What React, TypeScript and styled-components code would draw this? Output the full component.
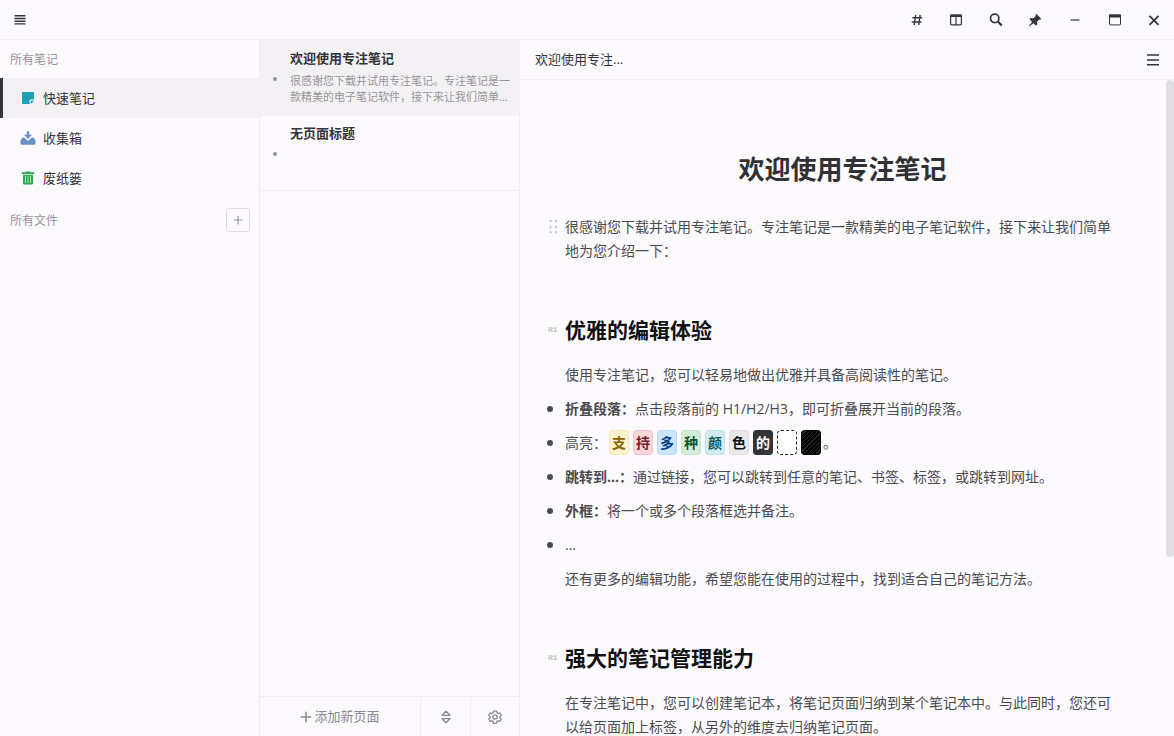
import React from "react";
import styled, { createGlobalStyle, css } from "styled-components";

const GlobalStyle = createGlobalStyle`
  * { box-sizing: border-box; }
  html, body { margin: 0; padding: 0; }
  body {
    background: #fcfafd;
    color: #34343b;
    font-family: "Open Sans", "Noto Sans CJK SC", sans-serif;
    font-size: 13px;
  }
  button { font: inherit; color: inherit; background: none; border: 0; padding: 0; cursor: pointer; }
  a { color: inherit; text-decoration: none; }
  h1, h2, p, ul { margin: 0; padding: 0; }
`;

const line = "#f0eef2";

const Shell = styled.div`
  display: flex;
  flex-direction: column;
  height: 100vh;
  overflow: hidden;
`;

const TopBar = styled.header`
  display: flex;
  justify-content: space-between;
  flex: none;
  height: 40px;
  border-bottom: 1px solid ${line};
`;

const WindowTools = styled.div`
  display: grid;
  grid-template-columns: repeat(7, minmax(0, 1fr));
  justify-items: center;
  width: 277px;
`;

const IconButton = styled.button<{ $width?: number }>`
  display: flex;
  align-items: center;
  justify-content: center;
  width: ${(p) => p.$width ?? 40}px;
  height: 39px;
  svg { display: block; }
`;

const Body = styled.div`
  display: flex;
  flex: 1;
  min-height: 0;
`;

const Sidebar = styled.nav`
  flex: none;
  width: 260px;
  border-right: 1px solid ${line};
`;

const SectionHead = styled.div<{ $tall?: boolean }>`
  display: flex;
  align-items: center;
  justify-content: space-between;
  height: ${(p) => (p.$tall ? 44 : 38)}px;
  padding: 0 9px 0 10px;
  color: #97959b;
  font-size: 12px;
`;

const NavItem = styled.a<{ $active?: boolean }>`
  display: flex;
  align-items: center;
  gap: 7px;
  height: 40px;
  padding-left: 17px;
  border-left: 3px solid ${(p) => (p.$active ? "#34343f" : "transparent")};
  background: ${(p) => (p.$active ? "#f3f1f4" : "transparent")};
  svg { display: block; }
`;

const Label = styled.span`
  padding-bottom: 2px;
`;

const AddFile = styled.button`
  display: flex;
  align-items: center;
  justify-content: center;
  width: 24px;
  height: 24px;
  border: 1px solid #e0dee2;
  border-radius: 3px;
`;

const PageList = styled.section`
  display: flex;
  flex-direction: column;
  flex: none;
  width: 260px;
  border-right: 1px solid ${line};
`;

const Pages = styled.div`
  flex: 1;
`;

const PageItem = styled.a<{ $active?: boolean }>`
  display: grid;
  grid-template-columns: 30px 1fr;
  align-items: start;
  height: 76px;
  padding: 9px 8px 0 0;
  border-bottom: 1px solid ${line};
  background: ${(p) => (p.$active ? "#f3f1f4" : "transparent")};
  & + & { margin-top: -1px; }
`;

const Dot = styled.span`
  width: 4px;
  height: 4px;
  margin: 28px 0 0 13px;
  border-radius: 50%;
  background: #97959b;
`;

const PageTitle = styled.div`
  font-weight: 600;
  line-height: 18px;
`;

const Preview = styled.div`
  padding-top: 6px;
  overflow: hidden;
  color: #97959b;
  font-size: 11px;
  line-height: 16px;
`;

const ListFooter = styled.footer`
  display: grid;
  grid-template-columns: 1fr 50px 49px;
  height: 40px;
  border-top: 1px solid ${line};
  color: #8b898f;
`;

const AddPage = styled.button`
  display: flex;
  align-items: center;
  justify-content: center;
  gap: 2px;
`;

const FooterButton = styled.button`
  display: flex;
  align-items: center;
  justify-content: center;
  border-left: 1px solid ${line};
`;

const Editor = styled.main`
  display: flex;
  flex-direction: column;
  flex: 1;
  min-width: 0;
`;

const EditorHead = styled.div`
  display: flex;
  align-items: center;
  justify-content: space-between;
  flex: none;
  height: 40px;
  padding-left: 15px;
  border-bottom: 1px solid ${line};
`;

const ScrollRow = styled.div`
  display: flex;
  flex: 1;
  min-height: 0;
`;

const Page = styled.article`
  flex: 1;
  min-width: 0;
  overflow-y: auto;
  scrollbar-width: none;
  padding: 69px 46px 40px 25px;
  color: #4b4a4f;
  font-size: 14px;
  line-height: 24px;
`;

const Track = styled.div`
  flex: none;
  width: 8px;
`;

const Thumb = styled.div`
  height: 72.7%;
  border-radius: 4px;
  background: #e1dfe2;
`;

const DocTitle = styled.h1`
  margin-bottom: 26px;
  padding-left: 20px;
  color: #313034;
  font-size: 26px;
  line-height: 40px;
  text-align: center;
`;

const block = css`
  display: grid;
  grid-template-columns: 20px 1fr;
`;

const Block = styled.div`
  ${block}
`;

const HeadBlock = styled.div`
  ${block}
  margin: 51px 0 17px;
`;

const List = styled.ul`
  margin: 10px 0;
  list-style: none;
`;

const Item = styled.li`
  ${block}
  & + & { margin-top: 10px; }
`;

const Bullet = styled.span`
  width: 6px;
  height: 6px;
  margin: 9px 0 0 2px;
  border-radius: 50%;
  background: #4b4a4f;
`;

const Handle = styled.button`
  display: block;
  height: 24px;
  padding-left: 4px;
  svg { display: block; }
`;

const Level = styled.button`
  height: 32px;
  padding-left: 3px;
  color: #c3c1c6;
  font-family: "Liberation Mono", monospace;
  font-size: 8px;
  font-weight: 700;
  line-height: 32px;
  text-align: left;
`;

const Heading = styled.h2`
  color: #111013;
  font-size: 21px;
  line-height: 32px;
`;

const Chip = styled.mark<{ $bg: string; $fg: string; $edge: string; $dashed?: boolean }>`
  margin: 0 2px;
  padding: 2px;
  border: 1px ${(p) => (p.$dashed ? "dashed" : "solid")} ${(p) => p.$edge};
  border-radius: 4px;
  background: ${(p) => p.$bg};
  color: ${(p) => p.$fg};
  font-weight: 600;
`;

const chips = [
  { text: "支", bg: "#fff3cd", fg: "#856404", edge: "#f6e8bc" },
  { text: "持", bg: "#f8d7da", fg: "#721c24", edge: "#f0c6cb" },
  { text: "多", bg: "#cce5ff", fg: "#004085", edge: "#b8daff" },
  { text: "种", bg: "#d4edda", fg: "#155724", edge: "#c3e6cb" },
  { text: "颜", bg: "#d1ecf1", fg: "#0c5460", edge: "#bee5eb" },
  { text: "色", bg: "#eae8ec", fg: "#111013", edge: "#dddbdf" },
  { text: "的", bg: "#343338", fg: "#ffffff", edge: "#343338" },
  { text: "\u3000", bg: "#ffffff", fg: "#111013", edge: "#222126", dashed: true },
  {
    text: "\u3000",
    bg: "repeating-linear-gradient(135deg, #000 0 2px, #2a2a2a 2px 3px)",
    fg: "#ffffff",
    edge: "#000000",
  },
];

const Stroke = ({ size = 16, width = 2, d }: { size?: number; width?: number; d: string }) => (
  <svg width={size} height={size} viewBox="0 0 16 16" fill="none" stroke="currentColor" strokeWidth={width}>
    <path d={d} />
  </svg>
);

const MenuIcon = () => <Stroke width={1.4} d="M2.5 3.8h11M2.5 6.5h11M2.5 9.2h11M2.5 11.9h11" />;

const ColumnsIcon = () => (
  <svg width="16" height="16" viewBox="0 0 16 16" fill="none" stroke="currentColor">
    <rect x="2.6" y="3" width="10.8" height="9.8" rx="0.8" strokeWidth="1.2" />
    <path d="M2.5 3.8h11" strokeWidth="2.4" />
    <path d="M8 4v9" strokeWidth="1.2" />
  </svg>
);

const SearchIcon = () => (
  <svg width="16" height="16" viewBox="0 0 16 16" fill="none" stroke="currentColor">
    <circle cx="6.7" cy="6.4" r="4.2" strokeWidth="1.7" />
    <path d="M9.8 9.5l4 4" strokeWidth="2.2" />
  </svg>
);

const PinIcon = () => (
  <svg width="16" height="16" viewBox="0 0 16 16" fill="currentColor">
    <path d="M9.3 1.8l4.9 4.9-1 1-1-.3-2.2 2.4.2 2.8-1.2 1.2-2.6-2.6-3.8 3-.5-.5 3-3.8-2.6-2.6 1.2-1.2 2.8.2 2.4-2.2-.4-1z" />
  </svg>
);

const MaximizeIcon = () => (
  <svg width="16" height="16" viewBox="0 0 16 16" fill="none" stroke="currentColor">
    <rect x="2.5" y="3" width="11" height="9.9" rx="0.8" strokeWidth="1" />
    <path d="M2 4h12" strokeWidth="3" />
  </svg>
);

const NoteIcon = () => (
  <svg width="16" height="16" viewBox="0 0 16 16">
    <path fill="#1ba2b8" d="M3 2h10a1 1 0 0 1 1 1v6.500h-3.500a1 1 0 0 0-1 1V14H3a1 1 0 0 1-1-1V3a1 1 0 0 1 1-1z" />
    <path fill="#1ba2b8" d="M10.7 10.7H14L10.7 14z" />
  </svg>
);

const InboxIcon = () => (
  <svg width="16" height="16" viewBox="0 0 16 16" fill="#6a92c2">
    <path d="M2.6 7.4h1.6L8 11l3.800-3.600h1.600l2.100 3.100v3a1.300 1.300 0 0 1-1.300 1.300H1.800a1.300 1.300 0 0 1-1.300-1.300v-3z" />
    <path d="M6.700 1.200h2.600v3.600h2.700L8 9 4 4.800h2.700z" />
  </svg>
);

const TrashIcon = () => (
  <svg width="16" height="16" viewBox="0 0 16 16">
    <path fill="#2fa84f" d="M6 1.500h4l.7.800H14v1.700H2V2.300h3.300zM3 4.700h10v8.600a1.300 1.300 0 0 1-1.300 1.300H4.300A1.300 1.300 0 0 1 3 13.300z" />
    <path stroke="#a6e0b3" d="M5.500 6v7M8 6v7M10.500 6v7" />
  </svg>
);

const SortIcon = () => (
  <svg width="14" height="14" viewBox="0 0 14 14" fill="none" stroke="currentColor" strokeWidth="1.3" strokeLinejoin="round">
    <path d="M7 1.300l3.800 4H3.200zM7 12.700l3.800-4H3.200z" />
  </svg>
);

const GearIcon = () => (
  <svg width="14" height="14" viewBox="0 0 24 24" fill="none" stroke="currentColor" strokeWidth="2.2" strokeLinejoin="round">
    <path d="M9.500 1.800h5l.8 3.200 1.800 1 3.200-.9 2.400 4.200-2.300 2.400v1.300l2.300 2.300-2.400 4.200-3.200-.9-1.800 1-.8 3.200h-5l-.8-3.200-1.800-1-3.200.9-2.400-4.200 2.300-2.300v-1.300L1.300 9.300l2.400-4.200 3.200.9 1.800-1z" />
    <circle cx="12" cy="12" r="3.6" />
  </svg>
);

const GripIcon = () => (
  <svg width="9" height="24" viewBox="0 0 9 24" fill="#c9c7cc">
    {[6, 12, 17].map((y) => (
      <React.Fragment key={y}>
        <circle cx="1.5" cy={y} r="1.2" />
        <circle cx="7" cy={y} r="1.2" />
      </React.Fragment>
    ))}
  </svg>
);

export default function App() {
  return (
    <Shell>
      <GlobalStyle />
      <TopBar>
        <IconButton aria-label="菜单"><MenuIcon /></IconButton>
        <WindowTools>
          <IconButton $width={39} aria-label="标签"><Stroke width={1.4} d="M6.7 2.8L5.2 13M11.2 2.8L9.7 13M3.4 5.7h9.800M2.700 10h9.800" /></IconButton>
          <IconButton $width={39} aria-label="分栏"><ColumnsIcon /></IconButton>
          <IconButton $width={39} aria-label="搜索"><SearchIcon /></IconButton>
          <IconButton $width={39} aria-label="置顶"><PinIcon /></IconButton>
          <IconButton $width={39} aria-label="最小化"><Stroke width={1.2} d="M3.5 8h9" /></IconButton>
          <IconButton $width={39} aria-label="最大化"><MaximizeIcon /></IconButton>
          <IconButton $width={39} aria-label="关闭"><Stroke width={1.8} d="M3.5 3.8l9 9M12.500 3.800l-9 9" /></IconButton>
        </WindowTools>
      </TopBar>
      <Body>
        <Sidebar>
          <SectionHead>所有笔记</SectionHead>
          <NavItem href="#quick" $active><NoteIcon /><Label>快速笔记</Label></NavItem>
          <NavItem href="#inbox"><InboxIcon /><Label>收集箱</Label></NavItem>
          <NavItem href="#trash"><TrashIcon /><Label>废纸篓</Label></NavItem>
          <SectionHead $tall>
            所有文件
            <AddFile aria-label="新建文件"><Stroke size={14} width={1.4} d="M8 3v10M3 8h10" /></AddFile>
          </SectionHead>
        </Sidebar>
        <PageList>
          <Pages>
            <PageItem href="#welcome" $active>
              <Dot />
              <div>
                <PageTitle>欢迎使用专注笔记</PageTitle>
                <Preview>很感谢您下载并试用专注笔记。专注笔记是一款精美的电子笔记软件，接下来让我们简单...</Preview>
              </div>
            </PageItem>
            <PageItem href="#untitled">
              <Dot />
              <PageTitle>无页面标题</PageTitle>
            </PageItem>
          </Pages>
          <ListFooter>
            <AddPage><Stroke size={12} width={2} d="M8 1v14M1 8h14" /><Label>添加新页面</Label></AddPage>
            <FooterButton aria-label="排序"><SortIcon /></FooterButton>
            <FooterButton aria-label="设置"><GearIcon /></FooterButton>
          </ListFooter>
        </PageList>
        <Editor>
          <EditorHead>
            <Label>欢迎使用专注...</Label>
            <IconButton $width={42} aria-label="页面菜单"><Stroke width={1.4} d="M2 3h12M2 8h12M2 12.7h12" /></IconButton>
          </EditorHead>
          <ScrollRow>
            <Page>
              <DocTitle>欢迎使用专注笔记</DocTitle>
              <Block>
                <Handle aria-label="拖动段落"><GripIcon /></Handle>
                <p>很感谢您下载并试用专注笔记。专注笔记是一款精美的电子笔记软件，接下来让我们简单地为您介绍一下：</p>
              </Block>
              <HeadBlock>
                <Level>H1</Level>
                <Heading>优雅的编辑体验</Heading>
              </HeadBlock>
              <Block>
                <span />
                <p>使用专注笔记，您可以轻易地做出优雅并具备高阅读性的笔记。</p>
              </Block>
              <List>
                <Item><Bullet /><p><b>折叠段落：</b>点击段落前的 H1/H2/H3，即可折叠展开当前的段落。</p></Item>
                <Item>
                  <Bullet />
                  <p>
                    高亮：
                    {chips.map((c, i) => (
                      <Chip key={i} $bg={c.bg} $fg={c.fg} $edge={c.edge} $dashed={c.dashed}>{c.text}</Chip>
                    ))}
                    。
                  </p>
                </Item>
                <Item><Bullet /><p><b>跳转到...：</b>通过链接，您可以跳转到任意的笔记、书签、标签，或跳转到网址。</p></Item>
                <Item><Bullet /><p><b>外框：</b>将一个或多个段落框选并备注。</p></Item>
                <Item><Bullet /><p>...</p></Item>
              </List>
              <Block>
                <span />
                <p>还有更多的编辑功能，希望您能在使用的过程中，找到适合自己的笔记方法。</p>
              </Block>
              <HeadBlock>
                <Level>H1</Level>
                <Heading>强大的笔记管理能力</Heading>
              </HeadBlock>
              <Block>
                <span />
                <p>在专注笔记中，您可以创建笔记本，将笔记页面归纳到某个笔记本中。与此同时，您还可以给页面加上标签，从另外的维度去归纳笔记页面。</p>
              </Block>
            </Page>
            <Track><Thumb /></Track>
          </ScrollRow>
        </Editor>
      </Body>
    </Shell>
  );
}
